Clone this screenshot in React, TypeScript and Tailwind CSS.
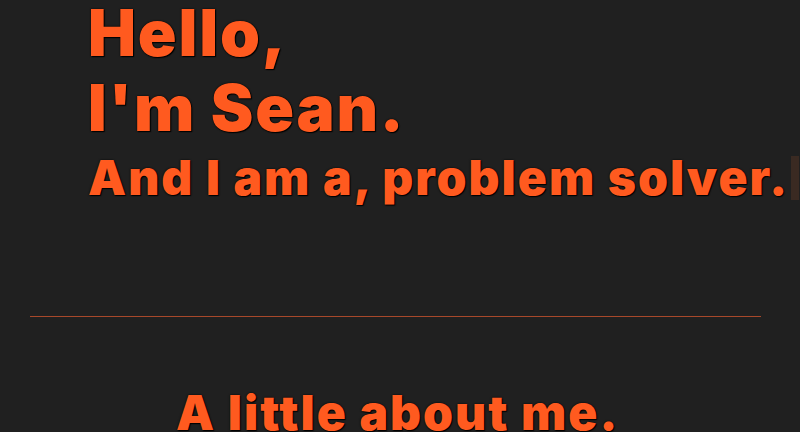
export default function App() {
  const shadow = "[text-shadow:0_0_2px_#000,1px_1px_1px_#000]";
  return (
    <div className="w-[800px] h-[432px] overflow-hidden bg-[#202020]" style={{ fontFamily: "Inter, 'Noto Sans', sans-serif" }}>
      <div className="pl-[88px]">
        <h1 className={`text-[64px] leading-[65px] font-black text-[#ff5a1f] tracking-[1.8px] ${shadow}`}>
          <div>Hello,</div>
          <div className="mt-[10px]">I'm Sean.</div>
        </h1>
        <div className="flex items-center mt-[12px]">
          <h2 className={`text-[48px] leading-[52px] font-black text-[#ff5a1f] tracking-[2px] ${shadow}`}>
            And I am a, problem solver.
          </h2>
          <span className="ml-[2px] w-[8px] h-[44px] bg-[#3a2a22]" />
        </div>
      </div>
      <div className="mt-[112px] ml-[30px] mr-[39px] h-[1px] bg-[#a8482a]" />
      <h2 className={`mt-[70px] pl-[176px] text-[48px] leading-[52px] font-black text-[#ff5a1f] tracking-[2px] whitespace-nowrap ${shadow}`}>
        A little about me.
      </h2>
    </div>
  );
}
